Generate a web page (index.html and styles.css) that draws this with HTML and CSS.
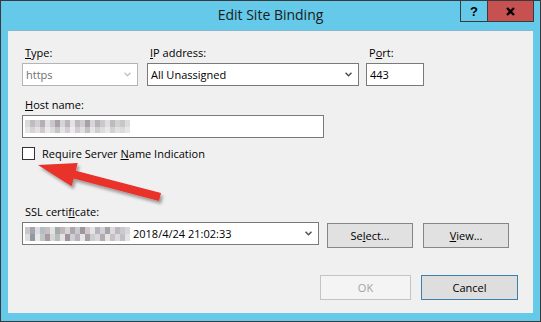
FILE: index.html
```html
<!DOCTYPE html>
<html lang="en">
<head>
    <meta charset="UTF-8">
    <meta name="viewport" content="width=device-width, initial-scale=1.0">
    <title>Edit Site Binding</title>
    <link rel="stylesheet" href="styles.css">
</head>
<body>
    <div class="window">
        <div class="titlebar">
            <div></div>
            <div class="title">Edit Site Binding</div>
            <div class="caption-buttons">
                <div class="caption-btn help">?</div>
                <div class="caption-btn close">
                    <svg width="9" height="9" viewBox="0 0 9 9"><path d="M1 1L8 8M8 1L1 8" stroke="#000" stroke-width="2.3"/></svg>
                </div>
            </div>
        </div>

        <div class="client">
            <div class="row">
                <div class="field type-field">
                    <div class="label"><u>T</u>ype:</div>
                    <div class="box combo disabled">
                        <span>https</span>
                        <svg class="chevron" width="7" height="5" viewBox="0 0 7 5"><path d="M0.5 0.8L3.5 3.8L6.5 0.8" fill="none" stroke="#c4c4c4" stroke-width="1.5"/></svg>
                    </div>
                </div>
                <div class="field ip-field">
                    <div class="label"><u>I</u>P address:</div>
                    <div class="box combo">
                        <span>All Unassigned</span>
                        <svg class="chevron" width="7" height="5" viewBox="0 0 7 5"><path d="M0.5 0.8L3.5 3.8L6.5 0.8" fill="none" stroke="#505050" stroke-width="1.5"/></svg>
                    </div>
                </div>
                <div class="field port-field">
                    <div class="label">P<u>o</u>rt:</div>
                    <div class="box">443</div>
                </div>
            </div>

            <div class="field host-field">
                <div class="label"><u>H</u>ost name:</div>
                <div class="box host-box"><span class="mosaic mosaic-host"></span></div>
            </div>

            <div class="check-row">
                <span class="checkbox"></span>
                <span>Require Server <u>N</u>ame Indication</span>
            </div>

            <div class="field ssl-field">
                <div class="label">SSL certi<u>f</u>icate:</div>
                <div class="ssl-row">
                    <div class="box combo ssl-box">
                        <span class="cert"><span class="mosaic mosaic-cert"></span>2018/4/24 21:02:33</span>
                        <svg class="chevron" width="7" height="5" viewBox="0 0 7 5"><path d="M0.5 0.8L3.5 3.8L6.5 0.8" fill="none" stroke="#505050" stroke-width="1.5"/></svg>
                    </div>
                    <div class="btn select-btn">Se<u>l</u>ect...</div>
                    <div class="btn view-btn"><u>V</u>iew...</div>
                </div>
            </div>

            <div class="footer">
                <div class="btn ok-btn disabled">OK</div>
                <div class="btn cancel-btn default">Cancel</div>
            </div>
        </div>

        <svg class="callout" width="541" height="322" viewBox="0 0 541 322">
            <defs>
                <filter id="shadow" x="-20%" y="-30%" width="140%" height="180%">
                    <feDropShadow dx="2" dy="3" stdDeviation="1.5" flood-color="#000" flood-opacity="0.35"/>
                </filter>
            </defs>
            <path d="M38 165L77.7 163.1L75.7 170.8L161 193.1L159 200.9L73.7 178.6L71.6 186.3Z" fill="#e9302b" filter="url(#shadow)"/>
        </svg>
    </div>
</body>
</html>
```

FILE: styles.css
```css
* {
    box-sizing: border-box;
}

body {
    margin: 0;
    font-family: "Open Sans", "Noto Sans", sans-serif;
    font-size: 11px;
    color: #000;
}

u {
    text-underline-offset: 1px;
}

.window {
    position: relative;
    width: 541px;
    height: 322px;
    background: #65c9e9;
    border: 1px solid #3a3a3a;
    display: flex;
    flex-direction: column;
}

/* title bar */
.titlebar {
    height: 29px;
    display: grid;
    grid-template-columns: 1fr auto 1fr;
    align-items: start;
}

.title {
    font-size: 14px;
    line-height: 19px;
    padding-top: 4px;
    color: #1b1b1b;
}

.caption-buttons {
    justify-self: end;
    display: flex;
    margin-right: 6px;
}

.caption-btn {
    height: 21px;
    border: 1px solid #3a3a3a;
    border-top: none;
    display: flex;
    align-items: center;
    justify-content: center;
}

.help {
    width: 28px;
    font-family: "Liberation Sans", sans-serif;
    font-weight: bold;
    font-size: 13px;
}

.close {
    width: 46px;
    background: #c75050;
    border-left: none;
}

/* client area */
.client {
    flex: 1;
    margin: 0 7px 8px;
    background: #f0f0f0;
    border-top: 1px solid #8bb6cf;
    padding: 14px 15px 0 14px;
    display: flex;
    flex-direction: column;
}

.row {
    display: flex;
    align-items: flex-start;
}

.label {
    line-height: 16px;
    margin-bottom: 2px;
    padding-left: 3px;
    white-space: nowrap;
}

.box {
    height: 23px;
    border: 1px solid #7a7a7a;
    background: #fff;
    display: flex;
    align-items: center;
    padding: 0 3px;
    white-space: nowrap;
}

.combo {
    justify-content: space-between;
    padding-right: 6px;
}

.combo.disabled {
    border-color: #b4b4b4;
    color: #707070;
}

.type-field {
    width: 116px;
}

.ip-field {
    width: 212px;
    margin-left: 9px;
}

.port-field {
    width: 58px;
    margin-left: 7px;
}

.host-field {
    margin-top: 11px;
}

.host-box {
    width: 302px;
    padding-left: 2px;
}

.check-row {
    margin-top: 8px;
    display: flex;
    align-items: center;
    gap: 7px;
    line-height: 15px;
}

.checkbox {
    width: 13px;
    height: 13px;
    border: 1px solid #333;
    background: #fff;
}

.ssl-field {
    margin-top: 43px;
}

.ssl-row {
    display: flex;
    align-items: flex-start;
}

.ssl-box {
    width: 297px;
    padding-left: 2px;
}

.cert {
    display: flex;
    align-items: center;
    gap: 3px;
}

/* blurred-out names */
.mosaic {
    display: inline-block;
    width: 105px;
}

.mosaic-host {
    height: 13px;
    background:
        linear-gradient(to right, #dadada 0 5px, #c3bbc3 5px 10px, #d0d0d0 10px 15px, #b6aeb6 15px 20px, #e1e1e1 20px 25px, #cbc6cb 25px 30px, #aaa2aa 30px 35px, #d5d5d5 35px 40px, #bcb4bc 40px 45px, #e3e3e3 45px 50px, #bfb7bf 50px 55px, #cdcdcd 55px 60px, #a8a0a8 60px 65px, #d6d6d6 65px 70px, #b8b3b8 70px 75px, #c9c9c9 75px 80px, #dfdfdf 80px 85px, #c1b9c1 85px 90px, #d1d1d1 90px 95px, #c7c7c7 95px 100px, #dcdcdc 100px 105px) top / 100% 7px no-repeat,
        linear-gradient(to right, #e6e6e6 0 5px, #d7d3d7 5px 10px, #e2e2e2 10px 15px, #cfc9cf 15px 20px, #eaeaea 20px 25px, #dcdcdc 25px 30px, #c9c3c9 30px 35px, #e4e4e4 35px 40px, #d4ced4 40px 45px, #ececec 45px 50px, #d3ccd3 50px 55px, #e0e0e0 55px 60px, #c6bfc6 60px 65px, #e5e5e5 65px 70px, #d2cdd2 70px 75px, #dddddd 75px 80px, #e9e9e9 80px 85px, #d6d0d6 85px 90px, #e1e1e1 90px 95px, #dbdbdb 95px 100px, #e7e7e7 100px 105px) bottom / 100% 6px no-repeat;
}

.mosaic-cert {
    height: 14px;
    background:
        linear-gradient(to right, #c8c8cc 0 5px, #a9a3ad 5px 10px, #d9dde2 10px 15px, #b4bcc4 15px 20px, #c9bec4 20px 25px, #e2e2e2 25px 30px, #a3aca6 30px 35px, #c2b6bd 35px 40px, #d5d5d5 40px 45px, #b0a6ae 45px 50px, #c6cbd0 50px 55px, #9d969f 55px 60px, #d2c7cc 60px 65px, #e4e4e4 65px 70px, #b9b3bb 70px 75px, #cfd3d7 75px 80px, #a9a1a8 80px 85px, #dbdbdb 85px 90px, #bcb7c0 90px 95px, #cacaca 95px 100px, #d8d6dc 100px 105px) top / 100% 7px no-repeat,
        linear-gradient(to right, #dedede 0 5px, #8f9aa4 5px 10px, #e8e8e8 10px 15px, #c4c4c8 15px 20px, #a89aa2 20px 25px, #d6d6d6 25px 30px, #b7bdb9 30px 35px, #e3e3e3 35px 40px, #9e949c 40px 45px, #d0d0d4 45px 50px, #bcb2b9 50px 55px, #e6e6e6 55px 60px, #a99fa7 60px 65px, #cdcdcd 65px 70px, #d9d9dd 70px 75px, #b3aab2 75px 80px, #e5e5e5 80px 85px, #c8c0c6 85px 90px, #dadada 90px 95px, #c0c0c4 95px 100px, #e4e4e4 100px 105px) bottom / 100% 7px no-repeat;
}

/* buttons */
.btn {
    height: 25px;
    border: 1px solid #868686;
    background: #e1e1e1;
    display: flex;
    align-items: center;
    justify-content: center;
}

.select-btn,
.view-btn {
    width: 86px;
    margin-top: 1px;
}

.select-btn {
    margin-left: 8px;
}

.view-btn {
    margin-left: 10px;
}

.footer {
    margin-top: 27px;
    display: flex;
    justify-content: flex-end;
    gap: 10px;
}

.ok-btn {
    width: 91px;
}

.cancel-btn {
    width: 97px;
}

.btn.disabled {
    background: #f4f4f4;
    border-color: #c4c4c4;
    color: #a3a3a3;
}

.btn.default {
    border-color: #3c7fb1;
    background: #dedede;
}

/* red pointer drawn over the dialog */
.callout {
    position: absolute;
    left: -1px;
    top: -1px;
    pointer-events: none;
}
```
